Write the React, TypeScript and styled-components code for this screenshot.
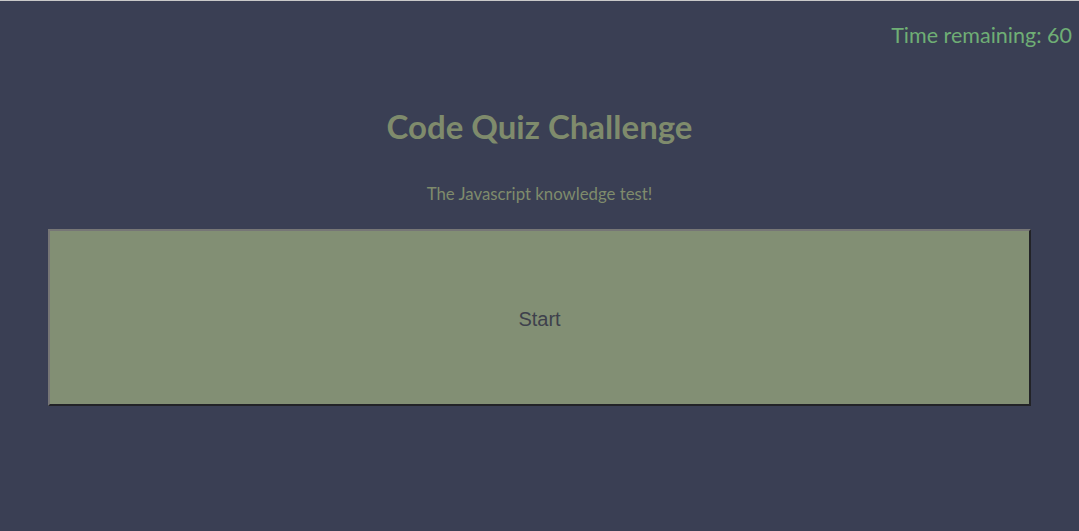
import React from "react";
import styled, { createGlobalStyle } from "styled-components";

const GlobalStyle = createGlobalStyle`
  html, body {
    margin: 0;
    padding: 0;
    background: #3a3f54;
    height: 100%;
  }
  body {
    font-family: "Lato", "DejaVu Sans", sans-serif;
    border-top: 1px solid #c9c9c9;
    box-sizing: border-box;
  }
`;

const Page = styled.div`
  display: flex;
  flex-direction: column;
  min-height: 530px;
`;

const Header = styled.header`
  display: flex;
  justify-content: flex-end;
  padding: 21px 7px 0 0;
`;

const Timer = styled.span`
  color: #6fae75;
  font-size: 21.5px;
  line-height: 26px;
`;

const Main = styled.main`
  display: flex;
  flex-direction: column;
  align-items: center;
  padding: 0 48px;
`;

const Title = styled.h1`
  margin: 58px 0 0;
  color: #7f8b6c;
  font-size: 33px;
  font-weight: 700;
  line-height: 40px;
`;

const Subtitle = styled.p`
  margin: 38px 0 0;
  color: #7f8b6c;
  font-size: 16.8px;
  line-height: 20px;
`;

const StartButton = styled.button`
  margin-top: 25px;
  width: 100%;
  height: 177px;
  padding-top: 4px;
  background: #828f74;
  border: 2px solid;
  border-color: #767676 #222327 #222327 #767676;
  color: #3e414c;
  font-family: "Liberation Sans", Arial, sans-serif;
  font-size: 20px;
  cursor: pointer;
`;

export default function App() {
  return (
    <>
      <GlobalStyle />
      <Page>
        <Header>
          <Timer>Time remaining: 60</Timer>
        </Header>
        <Main>
          <Title>Code Quiz Challenge</Title>
          <Subtitle>The Javascript knowledge test!</Subtitle>
          <StartButton>Start</StartButton>
        </Main>
      </Page>
    </>
  );
}
